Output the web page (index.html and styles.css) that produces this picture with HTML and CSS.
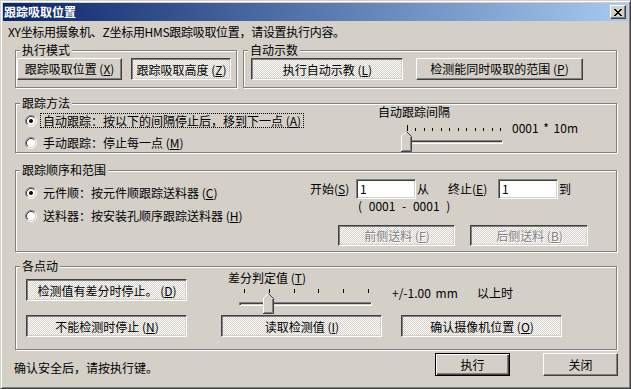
FILE: index.html
```html
<!DOCTYPE html>
<html lang="zh-CN">
<head>
<meta charset="utf-8">
<title>跟踪吸取位置</title>
<link rel="stylesheet" href="styles.css">
</head>
<body>
<div class="window">
  <div class="titlebar">
    <span class="title">跟踪吸取位置</span>
    <span class="close"><svg width="8" height="7" viewBox="0 0 8 7" shape-rendering="crispEdges"><path d="M0 0h2v1H0zM6 0h2v1H6zM1 1h2v1H1zM5 1h2v1H5zM2 2h4v1H2zM3 3h2v1H3zM2 4h4v1H2zM1 5h2v1H1zM5 5h2v1H5zM0 6h2v1H0zM6 6h2v1H6z" fill="#000"/></svg></span>
  </div>
  <div class="content">
    <div class="intro">XY坐标用摄象机、Z坐标用HMS跟踪吸取位置，请设置执行内容。</div>

    <div class="toprow">
      <div class="group g-mode">
        <span class="legend">执行模式</span>
        <div class="btn b-x">跟踪吸取位置 (<u>X</u>)</div>
        <div class="btn checked b-z">跟踪吸取高度 (<u>Z</u>)</div>
      </div>
      <div class="group g-auto">
        <span class="legend">自动示数</span>
        <div class="btn checked b-l">执行自动示教 (<u>L</u>)</div>
        <div class="btn b-p">检测能同时吸取的范围 (<u>P</u>)</div>
      </div>
    </div>

    <div class="group g-track">
      <span class="legend">跟踪方法</span>
      <div class="track-left">
        <div class="radio-row">
          <svg class="radio" width="12" height="12" viewBox="0 0 12 12"><circle cx="6" cy="6" r="4.5" fill="#fff"/><path d="M2.11 9.89A5.5 5.5 0 0 1 9.89 2.11" fill="none" stroke="#808080"/><path d="M9.89 2.11A5.5 5.5 0 0 1 2.11 9.89" fill="none" stroke="#fff"/><path d="M2.82 9.18A4.5 4.5 0 0 1 9.18 2.82" fill="none" stroke="#404040"/><path d="M9.18 2.82A4.5 4.5 0 0 1 2.82 9.18" fill="none" stroke="#d4d0c8"/><circle cx="6" cy="6" r="2" fill="#000"/></svg>
          <span class="radio-label focus">自动跟踪：按以下的间隔停止后，移到下一点 (<u>A</u>)</span>
        </div>
        <div class="radio-row row-gap9">
          <svg class="radio" width="12" height="12" viewBox="0 0 12 12"><circle cx="6" cy="6" r="4.5" fill="#fff"/><path d="M2.11 9.89A5.5 5.5 0 0 1 9.89 2.11" fill="none" stroke="#808080"/><path d="M9.89 2.11A5.5 5.5 0 0 1 2.11 9.89" fill="none" stroke="#fff"/><path d="M2.82 9.18A4.5 4.5 0 0 1 9.18 2.82" fill="none" stroke="#404040"/><path d="M9.18 2.82A4.5 4.5 0 0 1 2.82 9.18" fill="none" stroke="#d4d0c8"/></svg>
          <span class="radio-label">手动跟踪：停止每一点 (<u>M</u>)</span>
        </div>
      </div>
      <div class="track-right">
        <div class="slider-title">自动跟踪间隔</div>
        <div class="slider-row">
          <div class="slider1">
            <div class="ticks ticks1">
              <i class="tick major"></i><i class="tick"></i><i class="tick"></i><i class="tick"></i><i class="tick"></i><i class="tick"></i><i class="tick"></i><i class="tick"></i><i class="tick"></i><i class="tick"></i><i class="tick"></i><i class="tick"></i>
            </div>
            <div class="track track1"></div>
            <svg class="thumb thumb1" width="11" height="21" viewBox="0 0 11 21"><path d="M0 5L5 0h1l5 5v16H0z" fill="#d4d0c8"/><path d="M0.5 20.5V5.2L5.2 0.5" stroke="#fff" fill="none"/><path d="M5.5 0.5L10.5 5.5V20.5H0" stroke="#404040" fill="none"/><path d="M9.5 6V19.5H1" stroke="#808080" fill="none"/></svg>
          </div>
          <span class="slider-value">0001 * 10m</span>
        </div>
      </div>
    </div>

    <div class="group g-order">
      <span class="legend">跟踪顺序和范围</span>
      <div class="order-left">
        <div class="radio-row">
          <svg class="radio" width="12" height="12" viewBox="0 0 12 12"><circle cx="6" cy="6" r="4.5" fill="#fff"/><path d="M2.11 9.89A5.5 5.5 0 0 1 9.89 2.11" fill="none" stroke="#808080"/><path d="M9.89 2.11A5.5 5.5 0 0 1 2.11 9.89" fill="none" stroke="#fff"/><path d="M2.82 9.18A4.5 4.5 0 0 1 9.18 2.82" fill="none" stroke="#404040"/><path d="M9.18 2.82A4.5 4.5 0 0 1 2.82 9.18" fill="none" stroke="#d4d0c8"/><circle cx="6" cy="6" r="2" fill="#000"/></svg>
          <span class="radio-label">元件顺：按元件顺跟踪送料器 (<u>C</u>)</span>
        </div>
        <div class="radio-row row-gap10">
          <svg class="radio" width="12" height="12" viewBox="0 0 12 12"><circle cx="6" cy="6" r="4.5" fill="#fff"/><path d="M2.11 9.89A5.5 5.5 0 0 1 9.89 2.11" fill="none" stroke="#808080"/><path d="M9.89 2.11A5.5 5.5 0 0 1 2.11 9.89" fill="none" stroke="#fff"/><path d="M2.82 9.18A4.5 4.5 0 0 1 9.18 2.82" fill="none" stroke="#404040"/><path d="M9.18 2.82A4.5 4.5 0 0 1 2.82 9.18" fill="none" stroke="#d4d0c8"/></svg>
          <span class="radio-label">送料器：按安装孔顺序跟踪送料器 (<u>H</u>)</span>
        </div>
      </div>
      <div class="order-right">
        <div class="range-row">
          <span class="lbl-start">开始(<u>S</u>)</span>
          <span class="input">1</span>
          <span class="lbl-from">从</span>
          <span class="lbl-end">终止(<u>E</u>)</span>
          <span class="input">1</span>
          <span class="lbl-to">到</span>
        </div>
        <div class="range-hint">( 0001 - 0001 )</div>
        <div class="feed-row">
          <div class="btn checked disabled b-front">前侧送料 (<u>F</u>)</div>
          <div class="btn checked disabled b-back">后侧送料 (<u>B</u>)</div>
        </div>
      </div>
    </div>

    <div class="group g-points">
      <span class="legend">各点动</span>
      <div class="pts-row1">
        <div class="btn checked b-diff">检测值有差分时停止。 (<u>D</u>)</div>
        <div class="diff-col">
          <div class="diff-label">差分判定值 (<u>T</u>)</div>
          <div class="slider2">
            <div class="ticks ticks2">
              <i class="tick"></i><i class="tick"></i><i class="tick"></i><i class="tick"></i><i class="tick"></i><i class="tick"></i>
            </div>
            <div class="track track2"></div>
            <svg class="thumb thumb2" width="11" height="21" viewBox="0 0 11 21"><path d="M0 5L5 0h1l5 5v16H0z" fill="#d4d0c8"/><path d="M0.5 20.5V5.2L5.2 0.5" stroke="#fff" fill="none"/><path d="M5.5 0.5L10.5 5.5V20.5H0" stroke="#404040" fill="none"/><path d="M9.5 6V19.5H1" stroke="#808080" fill="none"/></svg>
          </div>
        </div>
        <span class="diff-value">+/-1.00 mm</span>
        <span class="diff-unit">以上时</span>
      </div>
      <div class="pts-row2">
        <div class="btn checked b-nodet">不能检测时停止 (<u>N</u>)</div>
        <div class="btn checked b-read">读取检测值 (<u>I</u>)</div>
        <div class="btn checked b-cam">确认摄像机位置 (<u>O</u>)</div>
      </div>
    </div>

    <div class="bottom">
      <span class="bottom-text">确认安全后，请按执行键。</span>
      <div class="btn default b-run">执行</div>
      <div class="btn b-close">关闭</div>
    </div>
  </div>
</div>
</body>
</html>
```

FILE: styles.css
```css
* { box-sizing: border-box; }

body {
  margin: 0;
  background: #d4d0c8;
  font-family: "Noto Sans CJK SC", "Noto Sans", sans-serif;
  font-size: 12px;
  line-height: 12px;
  color: #000;
}

u { text-underline-offset: 1px; }

.window {
  width: 631px;
  height: 389px;
  border: 1px solid;
  border-color: #d4d0c8 #404040 #404040 #d4d0c8;
  box-shadow: inset 1px 1px #fff, inset -1px -1px #808080;
  padding: 2px;
  background: #d4d0c8;
  display: flex;
  flex-direction: column;
}

.titlebar {
  height: 18px;
  background: linear-gradient(to right, #0a246a, #a6caf0);
  display: flex;
  align-items: center;
  padding: 0 2px 0 1px;
}

.title {
  flex: 1;
  color: #fff;
  font-weight: bold;
}

.close {
  width: 16px;
  height: 14px;
  background: #d4d0c8;
  border: 1px solid;
  border-color: #fff #404040 #404040 #fff;
  box-shadow: inset -1px -1px #808080;
  display: flex;
  align-items: center;
  justify-content: center;
}

.content {
  flex: 1;
  display: flex;
  flex-direction: column;
  padding-top: 5px;
}

.intro {
  margin-left: 5px;
  height: 12px;
  white-space: nowrap;
  letter-spacing: -0.3px;
}

/* group boxes */
.group {
  position: relative;
  border: 1px solid #808080;
  box-shadow: inset 1px 1px #fff, 1px 1px #fff;
}

.legend {
  position: absolute;
  top: -7px;
  left: 4px;
  padding: 0 2px;
  background: #d4d0c8;
  white-space: nowrap;
}

/* buttons */
.btn {
  display: flex;
  align-items: center;
  justify-content: center;
  height: 22px;
  border: 1px solid;
  border-color: #fff #404040 #404040 #fff;
  box-shadow: inset -1px -1px #808080;
  background: #d4d0c8;
  white-space: nowrap;
}

.btn.checked {
  border-color: #404040 #fff #fff #404040;
  box-shadow: inset 1px 1px #808080, inset -1px -1px #d4d0c8;
  background: repeating-conic-gradient(#fff 0 25%, #d4d0c8 0 50%) 0 0 / 2px 2px;
  padding: 1px 0 0 1px;
}

.btn.default {
  border-color: #000;
  box-shadow: inset 1px 1px #fff, inset -1px -1px #404040, inset -2px -2px #808080;
}

.btn.disabled {
  color: #808080;
  text-shadow: 1px 1px 0 #fff;
}

/* top row */
.toprow {
  display: flex;
  margin-top: 12px;
}

.g-mode {
  margin-left: 12px;
  width: 222px;
  height: 38px;
  padding: 7px 0 0 1px;
  display: flex;
}

.b-x { width: 105px; }
.b-z { width: 100px; margin-left: 9px; }

.g-auto {
  margin-left: 6px;
  width: 374px;
  height: 38px;
  padding: 7px 0 0 7px;
  display: flex;
}

.b-l { width: 152px; }
.b-p { width: 167px; margin-left: 13px; }

/* radios */
.radio-row {
  display: flex;
  align-items: center;
  height: 13px;
}

.row-gap9 { margin-top: 9px; }
.row-gap10 { margin-top: 10px; }

.radio { flex: none; }

.radio-label {
  margin-left: 4px;
  padding: 0 2px;
  height: 13px;
  line-height: 13px;
  white-space: nowrap;
}

.focus {
  outline: 1px dotted #000;
  outline-offset: 0;
}

/* tracking method */
.g-track {
  margin: 15px 0 0 12px;
  width: 602px;
  height: 50px;
  display: flex;
}

.track-left {
  width: 362px;
  padding: 10px 0 0 9px;
}

.track-right {
  padding-top: 2px;
}

.slider-title { height: 12px; }

.slider-row {
  display: flex;
  align-items: flex-start;
  margin-top: 7px;
}

.slider1 {
  position: relative;
  margin-left: 23px;
  width: 102px;
  height: 27px;
}

.ticks {
  display: flex;
  justify-content: space-between;
  align-items: flex-end;
}

.tick {
  display: block;
  width: 1px;
  height: 3px;
  background: #000;
}

.tick.major { height: 6px; }

.ticks1 {
  margin-left: 6px;
  width: 94px;
  height: 6px;
}

.track {
  height: 4px;
  border: 1px solid;
  border-color: #808080 #fff #fff #808080;
  box-shadow: inset 1px 1px #404040;
  background: #d4d0c8;
}

.track1 {
  margin: 9px 0 0 6px;
  width: 96px;
}

.thumb {
  position: absolute;
  left: 0;
  top: 6px;
}

.slider-value {
  margin: -3px 0 0 9px;
  white-space: pre;
  word-spacing: 2px;
}

/* order and range */
.g-order {
  margin: 17px 0 0 12px;
  width: 602px;
  height: 82px;
  display: flex;
}

.order-left {
  width: 294px;
  padding: 15px 0 0 9px;
}

.order-right {
  padding-top: 8px;
}

.range-row {
  display: flex;
  align-items: center;
  height: 20px;
  white-space: nowrap;
}

.lbl-start { width: 46px; }

.input {
  width: 60px;
  height: 20px;
  background: #fff;
  border: 1px solid;
  border-color: #808080 #fff #fff #808080;
  box-shadow: inset 1px 1px #404040, inset -1px -1px #d4d0c8;
  padding: 3px 0 0 3px;
}

.lbl-from { width: 31px; margin-left: 1px; }
.lbl-end { width: 50px; }
.lbl-to { margin-left: 1px; }

.range-hint {
  margin: 1px 0 0 48px;
  height: 12px;
  white-space: pre;
  word-spacing: 4px;
}

.feed-row {
  display: flex;
  margin-top: 13px;
}

.b-front { margin-left: 28px; width: 117px; height: 21px; }
.b-back { margin-left: 15px; width: 118px; height: 21px; }

/* each point */
.g-points {
  margin: 14px 0 0 12px;
  width: 602px;
  height: 84px;
  padding-top: 5px;
}

.pts-row1 {
  display: flex;
  height: 41px;
}

.b-diff {
  margin: 7px 0 0 10px;
  width: 161px;
}

.diff-col {
  margin-left: 41px;
  width: 164px;
}

.diff-label {
  height: 12px;
  white-space: nowrap;
}

.slider2 {
  position: relative;
  margin: 4px 0 0 11px;
  width: 133px;
  height: 25px;
}

.ticks2 {
  margin-left: 5px;
  width: 125px;
  height: 5px;
}

.ticks2 .tick { height: 4px; }

.track2 {
  margin-top: 9px;
  width: 133px;
}

.thumb2 {
  left: 24px;
  top: 5px;
}

.diff-value {
  margin-top: 15px;
  width: 85px;
  white-space: pre;
  word-spacing: 2px;
}

.diff-unit {
  margin-top: 15px;
}

.pts-row2 {
  display: flex;
  margin-top: 2px;
}

.b-nodet { margin-left: 10px; width: 161px; }
.b-read { margin-left: 34px; width: 161px; }
.b-cam { margin-left: 19px; width: 161px; }

/* bottom */
.bottom {
  display: flex;
  margin-top: 3px;
  padding-right: 10px;
}

.bottom-text {
  margin: 9px 0 0 11px;
  white-space: nowrap;
}

.b-run {
  margin-left: auto;
  width: 75px;
  height: 23px;
}

.b-close {
  margin-left: 33px;
  width: 75px;
  height: 23px;
}
```
